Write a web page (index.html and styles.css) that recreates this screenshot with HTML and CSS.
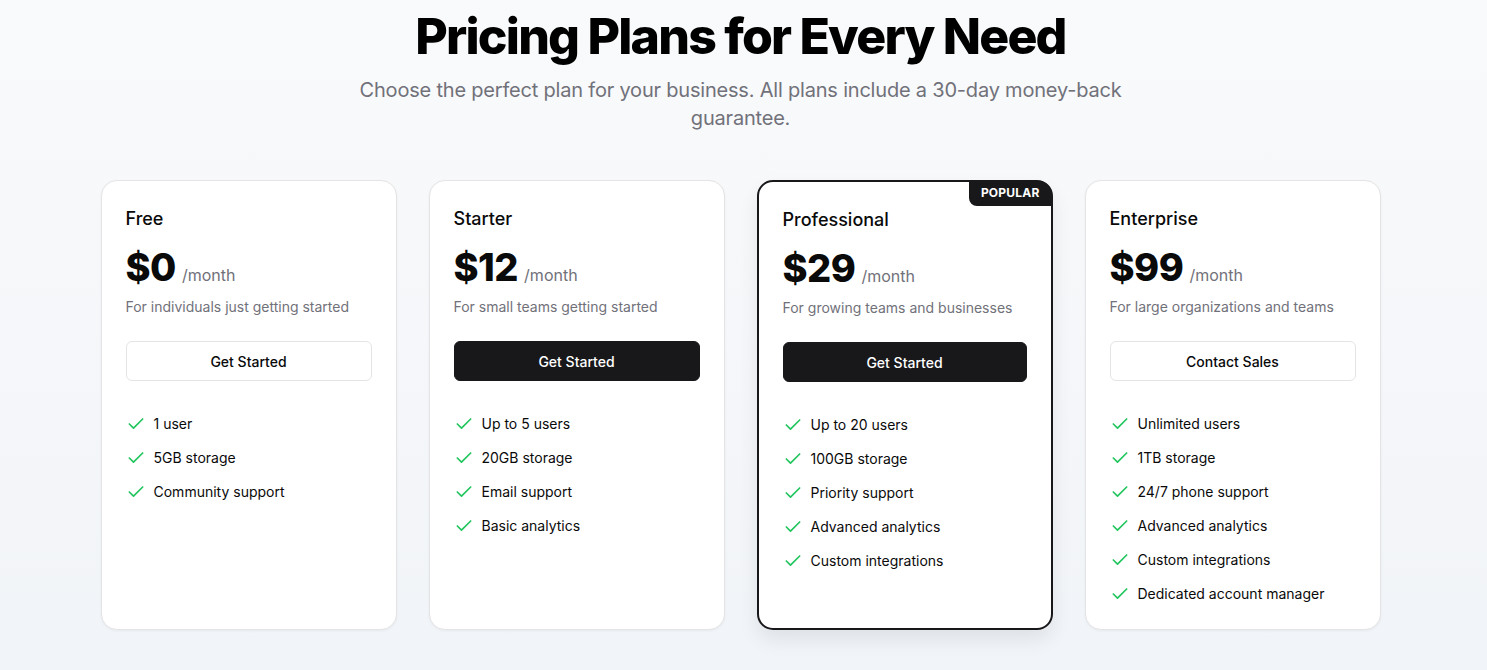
FILE: index.html
```html
<!DOCTYPE html>
<html lang="en">
<head>
<meta charset="utf-8">
<title>Pricing</title>
<link rel="stylesheet" href="styles.css">
</head>
<body>
<main class="page">
  <header class="intro">
    <h1 class="title">Pricing Plans for Every Need</h1>
    <p class="subtitle">Choose the perfect plan for your business. All plans include a 30-day money-back guarantee.</p>
  </header>
  <section class="plans">
    <article class="card">
      <h2 class="plan-name">Free</h2>
      <div class="price"><span class="amount">$0</span><span class="period">/month</span></div>
      <p class="desc">For individuals just getting started</p>
      <button class="btn btn-outline">Get Started</button>
      <ul class="features">
        <li><svg class="check" viewBox="0 0 24 24"><path d="M20 6 9 17l-5-5"/></svg>1 user</li>
        <li><svg class="check" viewBox="0 0 24 24"><path d="M20 6 9 17l-5-5"/></svg>5GB storage</li>
        <li><svg class="check" viewBox="0 0 24 24"><path d="M20 6 9 17l-5-5"/></svg>Community support</li>
      </ul>
    </article>
    <article class="card">
      <h2 class="plan-name">Starter</h2>
      <div class="price"><span class="amount">$12</span><span class="period">/month</span></div>
      <p class="desc">For small teams getting started</p>
      <button class="btn btn-dark">Get Started</button>
      <ul class="features">
        <li><svg class="check" viewBox="0 0 24 24"><path d="M20 6 9 17l-5-5"/></svg>Up to 5 users</li>
        <li><svg class="check" viewBox="0 0 24 24"><path d="M20 6 9 17l-5-5"/></svg>20GB storage</li>
        <li><svg class="check" viewBox="0 0 24 24"><path d="M20 6 9 17l-5-5"/></svg>Email support</li>
        <li><svg class="check" viewBox="0 0 24 24"><path d="M20 6 9 17l-5-5"/></svg>Basic analytics</li>
      </ul>
    </article>
    <article class="card card-popular">
      <span class="badge">POPULAR</span>
      <h2 class="plan-name">Professional</h2>
      <div class="price"><span class="amount">$29</span><span class="period">/month</span></div>
      <p class="desc">For growing teams and businesses</p>
      <button class="btn btn-dark">Get Started</button>
      <ul class="features">
        <li><svg class="check" viewBox="0 0 24 24"><path d="M20 6 9 17l-5-5"/></svg>Up to 20 users</li>
        <li><svg class="check" viewBox="0 0 24 24"><path d="M20 6 9 17l-5-5"/></svg>100GB storage</li>
        <li><svg class="check" viewBox="0 0 24 24"><path d="M20 6 9 17l-5-5"/></svg>Priority support</li>
        <li><svg class="check" viewBox="0 0 24 24"><path d="M20 6 9 17l-5-5"/></svg>Advanced analytics</li>
        <li><svg class="check" viewBox="0 0 24 24"><path d="M20 6 9 17l-5-5"/></svg>Custom integrations</li>
      </ul>
    </article>
    <article class="card">
      <h2 class="plan-name">Enterprise</h2>
      <div class="price"><span class="amount">$99</span><span class="period">/month</span></div>
      <p class="desc">For large organizations and teams</p>
      <button class="btn btn-outline">Contact Sales</button>
      <ul class="features">
        <li><svg class="check" viewBox="0 0 24 24"><path d="M20 6 9 17l-5-5"/></svg>Unlimited users</li>
        <li><svg class="check" viewBox="0 0 24 24"><path d="M20 6 9 17l-5-5"/></svg>1TB storage</li>
        <li><svg class="check" viewBox="0 0 24 24"><path d="M20 6 9 17l-5-5"/></svg>24/7 phone support</li>
        <li><svg class="check" viewBox="0 0 24 24"><path d="M20 6 9 17l-5-5"/></svg>Advanced analytics</li>
        <li><svg class="check" viewBox="0 0 24 24"><path d="M20 6 9 17l-5-5"/></svg>Custom integrations</li>
        <li><svg class="check" viewBox="0 0 24 24"><path d="M20 6 9 17l-5-5"/></svg>Dedicated account manager</li>
      </ul>
    </article>
  </section>
</main>
</body>
</html>
```

FILE: styles.css
```css
* { box-sizing: border-box; }
html, body { margin: 0; height: 100%; }
body {
  font-family: Inter, "Noto Sans", sans-serif;
  color: #0a0a0a;
  background: linear-gradient(to bottom, #f9fafb, #f1f4f8);
}
.page {
  max-width: 1280px;
  margin: 0 auto;
  padding: 7px 0 0;
  position: relative;
  left: -3px;
}
.intro { text-align: center; }
.title {
  margin: 0;
  font-size: 50px;
  line-height: 58px;
  font-weight: 800;
  letter-spacing: -1.8px;
  color: #000;
}
.subtitle {
  margin: 11px auto 0;
  max-width: 784px;
  font-size: 20px;
  line-height: 28px;
  letter-spacing: -0.2px;
  color: #71717a;
}
.plans {
  margin-top: 48px;
  display: grid;
  grid-template-columns: repeat(4, 1fr);
  gap: 32px;
}
.card {
  position: relative;
  background: #fff;
  border: 1px solid #e4e4e7;
  border-radius: 16px;
  padding: 24px 24px 25px;
  box-shadow: 0 1px 3px rgba(0,0,0,0.05);
}
.card-popular {
  border: 2px solid #18181b;
  box-shadow: 0 10px 20px rgba(0,0,0,0.08);
}
.badge {
  position: absolute;
  top: -1px;
  right: -1px;
  background: #18181b;
  color: #fff;
  font-size: 12px;
  font-weight: 700;
  line-height: 16px;
  letter-spacing: 0.2px;
  padding: 4px 12px 5px;
  border-radius: 0 14px 0 8px;
}
.plan-name {
  margin: 0;
  font-size: 18px;
  line-height: 28px;
  font-weight: 500;
}
.price {
  margin-top: 14px;
  display: flex;
  align-items: baseline;
}
.amount {
  font-size: 38px;
  line-height: 40px;
  font-weight: 800;
  letter-spacing: -0.5px;
}
.period {
  margin-left: 6px;
  font-size: 16px;
  color: #71717a;
}
.desc {
  margin: 10px 0 0;
  font-size: 14px;
  line-height: 20px;
  color: #71717a;
}
.btn {
  display: block;
  width: 100%;
  height: 40px;
  margin-top: 24px;
  font-family: inherit;
  font-size: 14px;
  font-weight: 500;
  border-radius: 6px;
  cursor: pointer;
}
.btn-outline {
  background: #fff;
  color: #09090b;
  border: 1px solid #e4e4e7;
}
.btn-dark {
  background: #18181b;
  color: #fff;
  border: 1px solid #18181b;
}
.features {
  list-style: none;
  margin: 33px 0 0;
  padding: 0;
  display: flex;
  flex-direction: column;
  gap: 14px;
}
.features li {
  display: flex;
  align-items: center;
  gap: 8px;
  font-size: 14px;
  line-height: 20px;
}
.check {
  width: 20px;
  height: 20px;
  flex: none;
  fill: none;
  stroke: #22c55e;
  stroke-width: 2;
  stroke-linecap: round;
  stroke-linejoin: round;
}
```
